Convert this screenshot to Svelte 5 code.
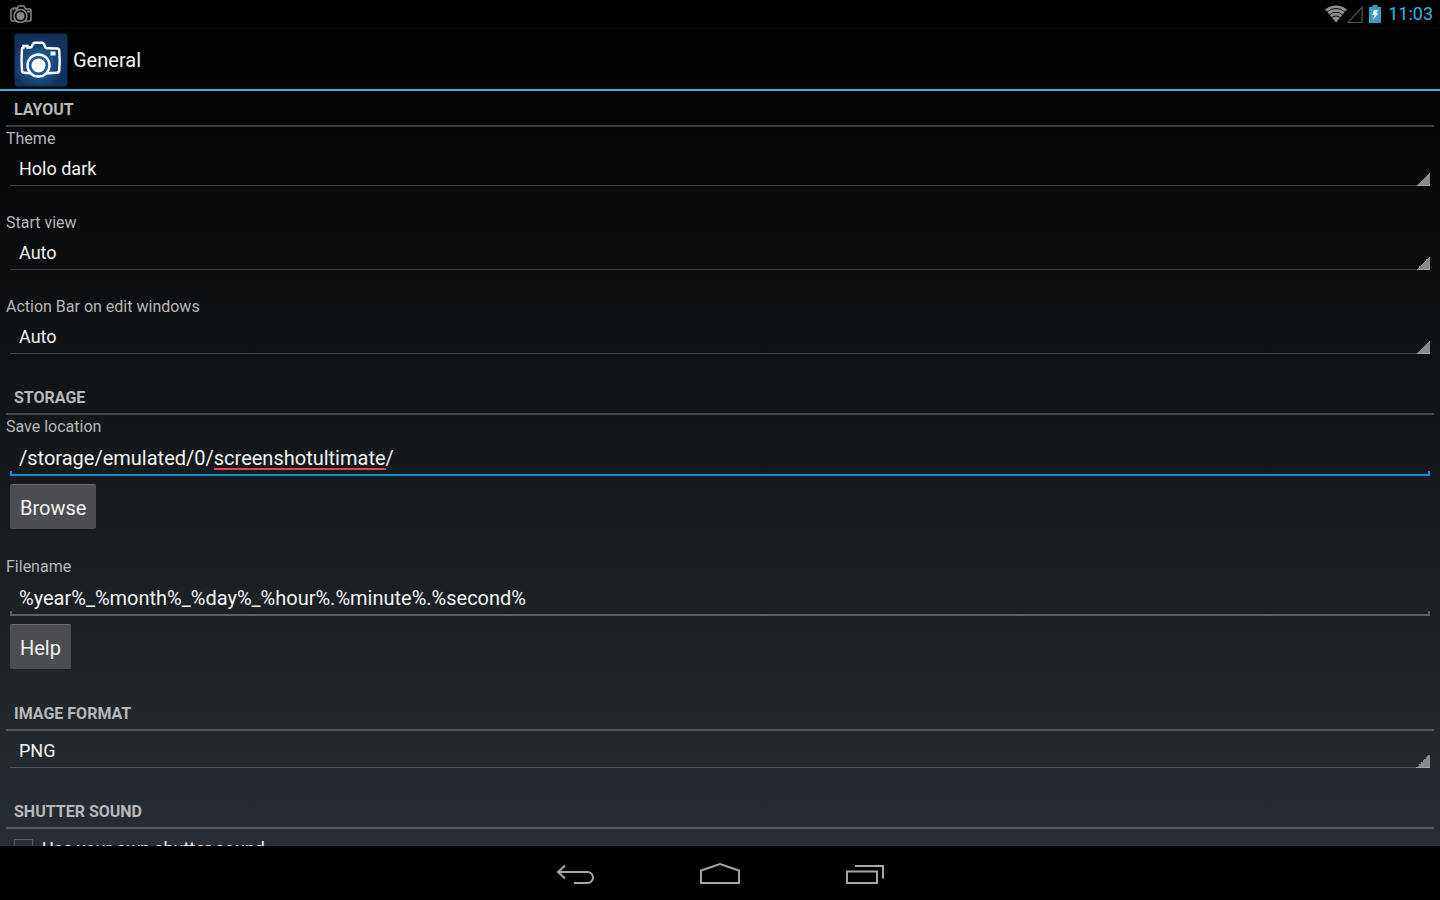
<script lang="ts">
	import { onMount } from 'svelte';

	let theme = 'Holo dark';
	let startView = 'Auto';
	let actionBar = 'Auto';
	let saveLocation = '/storage/emulated/0/screenshotultimate/';
	let filename = '%year%_%month%_%day%_%hour%.%minute%.%second%';
	let imageFormat = 'PNG';
	let ownSound = false;

	const unknownWord = 'screenshotultimate';

	let saveInput: HTMLInputElement;
	let mark = { left: 0, width: 0 };

	// width of the text in the input's own font, used to place the spelling mark
	function updateMark(text: string) {
		if (!saveInput) return;
		const index = text.indexOf(unknownWord);
		const ctx = document.createElement('canvas').getContext('2d');
		if (index < 0 || !ctx) {
			mark = { left: 0, width: 0 };
			return;
		}
		ctx.font = getComputedStyle(saveInput).font;
		mark = {
			left: Math.round(ctx.measureText(text.slice(0, index)).width),
			width: Math.round(ctx.measureText(unknownWord).width)
		};
	}

	onMount(() => updateMark(saveLocation));
	$: updateMark(saveLocation);
</script>

<div class="screen">
	<div class="status-bar">
		<svg class="status-camera" viewBox="0 0 44 38" aria-hidden="true">
			<path d="M4 8h3V6h5v2h2l3-6h11l3 6h9q2 0 2 2v20q0 2-2 2H4q-2 0-2-2V10q0-2 2-2z" fill="none" stroke="#888" stroke-width="3" />
			<circle cx="21" cy="22" r="13" fill="#000" stroke="#888" stroke-width="3" />
			<circle cx="21" cy="22" r="8" fill="#888" />
			<rect x="34" y="11" width="6" height="4" fill="#888" />
		</svg>
		<div class="status-icons">
			<svg class="wifi" viewBox="0 0 23 18" aria-hidden="true">
				<path d="M0 4.200Q11.500-4.200 23 4.200L11.500 18z" fill="#8c8c8c" />
				<g fill="none" stroke="#000" stroke-width="1">
					<path d="M2 6.800Q11.500-0.400 21 6.800" />
					<path d="M4.500 10Q11.500 4.200 18.500 10" />
					<path d="M7 13Q11.500 9 16 13" />
				</g>
			</svg>
			<svg class="signal" viewBox="0 0 17 19" aria-hidden="true">
				<path d="M16 1.500V18H1z" fill="none" stroke="#555" stroke-width="1.300" />
			</svg>
			<svg class="battery" viewBox="0 0 12 18" aria-hidden="true">
				<path d="M3.500 0h5v2H12v16H0V2h3.500z" fill="#3a9cc4" />
				<path d="M5 5h4L7.500 8.500H9.500L4 14.500 5.500 10H3z" fill="#e6f4fa" />
			</svg>
			<span class="clock">11:03</span>
		</div>
	</div>

	<header class="action-bar">
		<svg class="app-icon" viewBox="0 0 54 54" aria-hidden="true">
			<defs>
				<radialGradient id="glow" cx="45%" cy="58%" r="50%">
					<stop offset="0" stop-color="#2a7fc0" />
					<stop offset="0.500" stop-color="#1c5088" />
					<stop offset="1" stop-color="#14305c" />
				</radialGradient>
			</defs>
			<rect x="0.500" y="0.500" width="53" height="53" rx="4" fill="url(#glow)" />
			<path d="M9.500 14.500V13h4v1.500h2.500q1.500 0 2-1.500l1-2q.6-1.200 1.800-1.200h7.200q1.300 0 1.900 1.200l1.300 3q.6 1.300 2 1.300l9.800.2q2 0 2.200 2 1 10.500 0 20-.2 2-2.200 2.200-18 1.400-33.300 0-1.500-.1-1.700-1.700-.9-11.500 0-22 .1-1.500 1.500-1.500z" fill="none" stroke="#fff" stroke-width="2.400" />
			<circle cx="24.500" cy="32.500" r="11" fill="#1c5a94" stroke="#fff" stroke-width="2.400" />
			<circle cx="24.500" cy="32.500" r="7" fill="#fff" />
			<rect x="36.500" y="18.500" width="5" height="4" fill="#fff" />
		</svg>
		<h1>General</h1>
	</header>

	<main>
		<section>
			<h2>Layout</h2>
			<div class="field">
				<label for="theme">Theme</label>
				<select id="theme" bind:value={theme}>
					<option>Holo dark</option>
					<option>Holo light</option>
				</select>
			</div>
			<div class="field">
				<label for="start-view">Start view</label>
				<select id="start-view" bind:value={startView}>
					<option>Auto</option>
				</select>
			</div>
			<div class="field">
				<label for="action-bar">Action Bar on edit windows</label>
				<select id="action-bar" bind:value={actionBar}>
					<option>Auto</option>
				</select>
			</div>
		</section>

		<section>
			<h2>Storage</h2>
			<div class="field">
				<label for="save-location">Save location</label>
				<div class="edit">
					<input
						id="save-location"
						class="active"
						type="text"
						spellcheck="false"
						bind:this={saveInput}
						bind:value={saveLocation}
					/>
					<span class="mark" style="margin-left: {mark.left}px; width: {mark.width}px"></span>
				</div>
				<button type="button">Browse</button>
			</div>
			<div class="field">
				<label for="filename">Filename</label>
				<div class="edit">
					<input id="filename" type="text" spellcheck="false" bind:value={filename} />
				</div>
				<button type="button">Help</button>
			</div>
		</section>

		<section>
			<h2 id="image-format">Image format</h2>
			<div class="field">
				<select aria-labelledby="image-format" bind:value={imageFormat}>
					<option>PNG</option>
					<option>JPEG</option>
				</select>
			</div>
		</section>

		<section>
			<h2>Shutter sound</h2>
			<label class="check">
				<input type="checkbox" bind:checked={ownSound} />
				Use your own shutter sound
			</label>
		</section>
	</main>

	<nav class="nav-bar">
		<button type="button" aria-label="Back">
			<svg viewBox="0 0 40 24" aria-hidden="true">
				<path d="M3 10h29.500a5.500 5.500 0 0 1 0 11H19M10 3.500L3 10l7 6.500" />
			</svg>
		</button>
		<button type="button" aria-label="Home">
			<svg viewBox="0 0 40 24" aria-hidden="true">
				<path d="M1 21V8.500L20 2l19 6.500V21z" />
			</svg>
		</button>
		<button type="button" aria-label="Recent apps">
			<svg viewBox="0 0 40 24" aria-hidden="true">
				<path d="M2 9.500h30V21H2zM10 4h28v12.500" />
			</svg>
		</button>
	</nav>
</div>

<style>
	:global(body) {
		margin: 0;
		background: #000;
	}

	.screen {
		display: flex;
		flex-direction: column;
		height: 100vh;
		overflow: hidden;
		color: #f3f3f3;
		font-family: Roboto, sans-serif;
		background: linear-gradient(#000, #050607 15%, #14181b 50%, #22272b 80%, #282d36 94%);
	}

	.status-bar {
		display: flex;
		flex: none;
		align-items: center;
		justify-content: space-between;
		box-sizing: border-box;
		height: 29px;
		padding: 0 7px 0 10px;
		background: #000;
		border-bottom: 1px solid #0b0b0b;
	}

	.status-camera {
		width: 22px;
		height: 19px;
	}

	.status-icons {
		display: flex;
		align-items: center;
	}

	.wifi {
		width: 22px;
		height: 18px;
	}

	.signal {
		width: 16px;
		height: 19px;
	}

	.battery {
		width: 12px;
		height: 18px;
		margin: 0 7px 0 6px;
	}

	.clock {
		color: #33b5e5;
		font-size: 18px;
		line-height: 28px;
	}

	.action-bar {
		display: flex;
		flex: none;
		align-items: center;
		gap: 5px;
		box-sizing: border-box;
		height: 62px;
		padding: 2px 14px 0;
		border-bottom: 2px solid #33b5e5;
	}

	.app-icon {
		width: 54px;
		height: 54px;
	}

	h1 {
		margin: 0;
		font-size: 20px;
		font-weight: 400;
	}

	main {
		flex: 1;
		min-height: 0;
		padding: 0 6px;
		overflow: hidden;
	}

	h2 {
		box-sizing: border-box;
		height: 36px;
		margin: 0;
		padding: 0 8px;
		color: #b8b8b8;
		font-size: 16px;
		font-weight: 700;
		line-height: 38px;
		text-transform: uppercase;
		border-bottom: 2px solid rgba(255, 255, 255, 0.22);
	}

	.field {
		display: flex;
		flex-direction: column;
		align-items: flex-start;
		margin-bottom: 25px;
	}

	.field label {
		height: 22px;
		color: #b8b8b8;
		font-size: 16px;
		line-height: 24px;
	}

	select {
		align-self: stretch;
		height: 37px;
		margin: 0 4px;
		padding: 3px 9px 0;
		color: #f3f3f3;
		font: 18px Roboto, sans-serif;
		background: linear-gradient(135deg, transparent 50%, #8a8a8a 50%) right bottom / 14px 14px no-repeat;
		border: 0;
		border-bottom: 1px solid rgba(255, 255, 255, 0.2);
		border-radius: 0;
		outline: 0;
		appearance: none;
		background-origin: border-box;
		background-clip: border-box;
	}

	option {
		background: #282828;
	}

	.edit {
		position: relative;
		align-self: stretch;
		margin: 0 4px 8px;
	}

	.edit input {
		--line: #5c6063;
		display: block;
		box-sizing: border-box;
		width: 100%;
		height: 39px;
		padding: 3px 9px 0;
		color: #f3f3f3;
		font: 20px Roboto, sans-serif;
		background:
			linear-gradient(var(--line), var(--line)) left bottom / 100% 2px no-repeat,
			linear-gradient(var(--line), var(--line)) left bottom / 2px 5px no-repeat,
			linear-gradient(var(--line), var(--line)) right bottom / 2px 5px no-repeat;
		border: 0;
		outline: 0;
	}

	.edit input.active {
		--line: #0a94cc;
	}

	.mark {
		position: absolute;
		bottom: 6px;
		left: 9px;
		height: 2px;
		background: #f04040;
	}

	.field button {
		height: 45px;
		margin: 0 4px 1px;
		padding: 2px 10px 0;
		color: #f3f3f3;
		font: 20px Roboto, sans-serif;
		background: #4c4d50;
		border: 0;
		border-top: 1px solid #68696b;
		border-radius: 2px;
	}

	.check {
		display: flex;
		align-items: center;
		gap: 9px;
		height: 38px;
		padding: 0 8px;
		font-size: 18px;
	}

	.check input {
		box-sizing: border-box;
		width: 19px;
		height: 19px;
		margin: 0;
		border: 1px solid #5c6063;
		appearance: none;
	}

	.check input:checked {
		background: #33b5e5;
	}

	.nav-bar {
		display: flex;
		flex: none;
		justify-content: center;
		height: 54px;
		background: #000;
	}

	.nav-bar button {
		display: flex;
		align-items: center;
		justify-content: center;
		width: 145px;
		padding: 2px 0 0;
		background: transparent;
		border: 0;
	}

	.nav-bar svg {
		width: 40px;
		height: 24px;
		fill: none;
		stroke: #a6a6a6;
		stroke-width: 2;
	}
</style>
